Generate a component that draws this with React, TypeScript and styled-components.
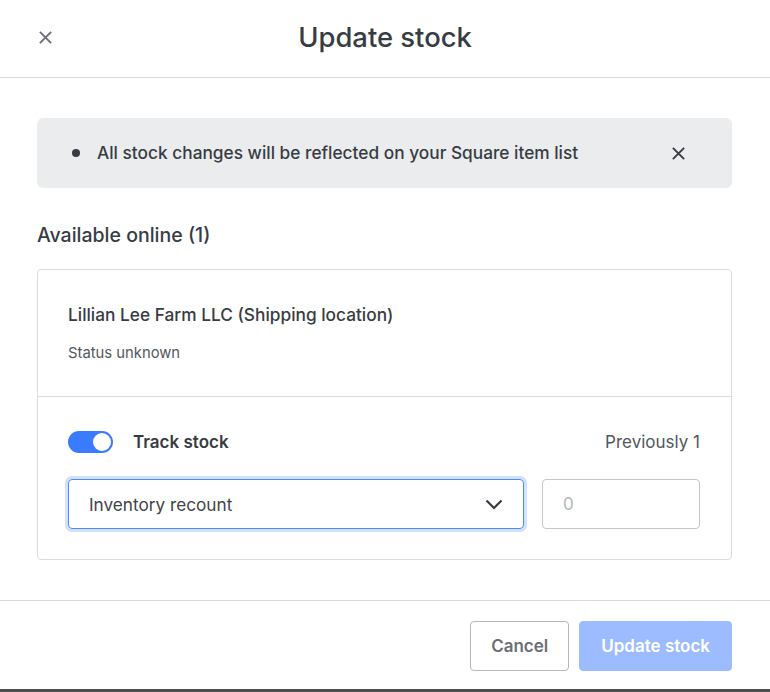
import styled, { createGlobalStyle } from 'styled-components';

const GlobalStyle = createGlobalStyle`
  html, body {
    margin: 0;
    padding: 0;
    background: #4d4d4d;
  }
  body {
    font-family: Inter, Roboto, "Liberation Sans", sans-serif;
    color: #3a3f45;
  }
  * {
    box-sizing: border-box;
  }
`;

const Dialog = styled.div`
  width: 770px;
  height: 689px;
  background: #ffffff;
  display: flex;
  flex-direction: column;
`;

const Header = styled.header`
  position: relative;
  height: 78px;
  border-bottom: 1px solid #d9d9d9;
  display: flex;
  align-items: center;
  justify-content: center;
  flex-shrink: 0;
`;

const CloseButton = styled.button`
  position: absolute;
  left: 33px;
  top: 25px;
  width: 24px;
  height: 24px;
  padding: 0;
  border: none;
  background: none;
  display: flex;
  align-items: center;
  justify-content: center;
  cursor: pointer;
`;

const Title = styled.h1`
  margin: 0 0 3px;
  font-size: 27.4px;
  font-weight: 500;
  color: #373c43;
`;

const Body = styled.main`
  flex: 1;
  padding: 40px 38px 0 37px;
  display: flex;
  flex-direction: column;
`;

const Banner = styled.div`
  height: 70px;
  background: #ebecee;
  border-radius: 6px;
  display: flex;
  align-items: center;
  padding: 0 44px 0 35px;
`;

const Bullet = styled.span`
  width: 8px;
  height: 8px;
  border-radius: 50%;
  background: #373c43;
  margin-right: 17px;
  flex-shrink: 0;
`;

const BannerText = styled.p`
  flex: 1;
  margin: 0 0 2px;
  font-size: 17.3px;
  font-weight: 500;
  color: #373c43;
`;

const DismissButton = styled.button`
  width: 20px;
  height: 20px;
  padding: 0;
  border: none;
  background: none;
  display: flex;
  align-items: center;
  justify-content: center;
`;

const SectionTitle = styled.h2`
  margin: 35px 0 22px;
  font-size: 19.5px;
  font-weight: 500;
  line-height: 24px;
  color: #373c43;
`;

const Card = styled.section`
  border: 1px solid #dcdcdc;
  border-radius: 4px;
`;

const CardTop = styled.div`
  height: 127px;
  padding: 35px 30px 0;
  border-bottom: 1px solid #dcdcdc;
`;

const LocationName = styled.div`
  font-size: 17.3px;
  font-weight: 500;
  line-height: 20px;
  color: #373c43;
`;

const Status = styled.div`
  margin-top: 19px;
  font-size: 14.8px;
  line-height: 18px;
  color: #52575d;
`;

const CardBottom = styled.div`
  padding: 34px 31px 30px 30px;
  display: flex;
  flex-direction: column;
  gap: 26px;
`;

const TrackRow = styled.div`
  display: flex;
  align-items: center;
  height: 22px;
`;

const Toggle = styled.span<{ $on: boolean }>`
  position: relative;
  width: 45px;
  height: 22px;
  border-radius: 11px;
  background: ${({ $on }) => ($on ? '#3b7bff' : '#c4c6c9')};
  flex-shrink: 0;

  &::after {
    content: '';
    position: absolute;
    top: 2px;
    ${({ $on }) => ($on ? 'right: 2px;' : 'left: 2px;')}
    width: 18px;
    height: 18px;
    border-radius: 50%;
    background: #ffffff;
  }
`;

const TrackLabel = styled.span`
  margin-left: 20px;
  font-size: 17px;
  font-weight: 600;
  color: #373c43;
  flex: 1;
`;

const Previously = styled.span`
  font-size: 17px;
  color: #52575d;
`;

const InputRow = styled.div`
  display: flex;
  gap: 18px;
`;

const Select = styled.div`
  flex: 1;
  height: 50px;
  border: 1px solid #4d8bff;
  border-radius: 4px;
  box-shadow: 0 0 0 3px #d2e1ff;
  display: flex;
  align-items: center;
  padding: 0 20px 0 20px;
  font-size: 17.2px;
  color: #3f444a;
`;

const SelectValue = styled.span`
  flex: 1;
`;

const NumberInput = styled.input`
  width: 158px;
  height: 50px;
  border: 1px solid #c4c6c9;
  border-radius: 4px;
  padding: 0 20px;
  font-family: inherit;
  font-size: 17px;
  color: #373c43;
  outline: none;

  &::placeholder {
    color: #b4b7bb;
  }
`;

const Footer = styled.footer`
  height: 89px;
  border-top: 1px solid #d9d9d9;
  display: flex;
  justify-content: flex-end;
  align-items: flex-start;
  gap: 10px;
  padding: 20px 38px 0 0;
  flex-shrink: 0;
`;

const Button = styled.button<{ $primary?: boolean }>`
  height: 50px;
  padding: 0 ${({ $primary }) => ($primary ? '21px' : '20px')};
  border-radius: 4px;
  font-family: inherit;
  font-size: 17px;
  font-weight: 600;
  border: 1px solid ${({ $primary }) => ($primary ? '#9dbcff' : '#b4b6b9')};
  background: ${({ $primary }) => ($primary ? '#9dbcff' : '#ffffff')};
  color: ${({ $primary }) => ($primary ? '#ffffff' : '#6b6f75')};
`;

const CrossIcon = ({ size, color }: { size: number; color: string }) => (
  <svg width={size} height={size} viewBox="0 0 16 16" fill="none">
    <path d="M2 2L14 14M14 2L2 14" stroke={color} strokeWidth="2" />
  </svg>
);

const Chevron = () => (
  <svg width="18" height="11" viewBox="0 0 18 11" fill="none">
    <path d="M1.5 1.5L9 9L16.5 1.5" stroke="#373c43" strokeWidth="2.2" />
  </svg>
);

export default function App() {
  return (
    <>
      <GlobalStyle />
      <Dialog>
        <Header>
          <CloseButton aria-label="Close">
            <CrossIcon size={15} color="#6b6f75" />
          </CloseButton>
          <Title>Update stock</Title>
        </Header>
        <Body>
          <Banner>
            <Bullet />
            <BannerText>All stock changes will be reflected on your Square item list</BannerText>
            <DismissButton aria-label="Dismiss">
              <CrossIcon size={15} color="#373c43" />
            </DismissButton>
          </Banner>
          <SectionTitle>Available online (1)</SectionTitle>
          <Card>
            <CardTop>
              <LocationName>Lillian Lee Farm LLC (Shipping location)</LocationName>
              <Status>Status unknown</Status>
            </CardTop>
            <CardBottom>
              <TrackRow>
                <Toggle $on />
                <TrackLabel>Track stock</TrackLabel>
                <Previously>Previously 1</Previously>
              </TrackRow>
              <InputRow>
                <Select>
                  <SelectValue>Inventory recount</SelectValue>
                  <Chevron />
                </Select>
                <NumberInput placeholder="0" />
              </InputRow>
            </CardBottom>
          </Card>
        </Body>
        <Footer>
          <Button>Cancel</Button>
          <Button $primary>Update stock</Button>
        </Footer>
      </Dialog>
    </>
  );
}
